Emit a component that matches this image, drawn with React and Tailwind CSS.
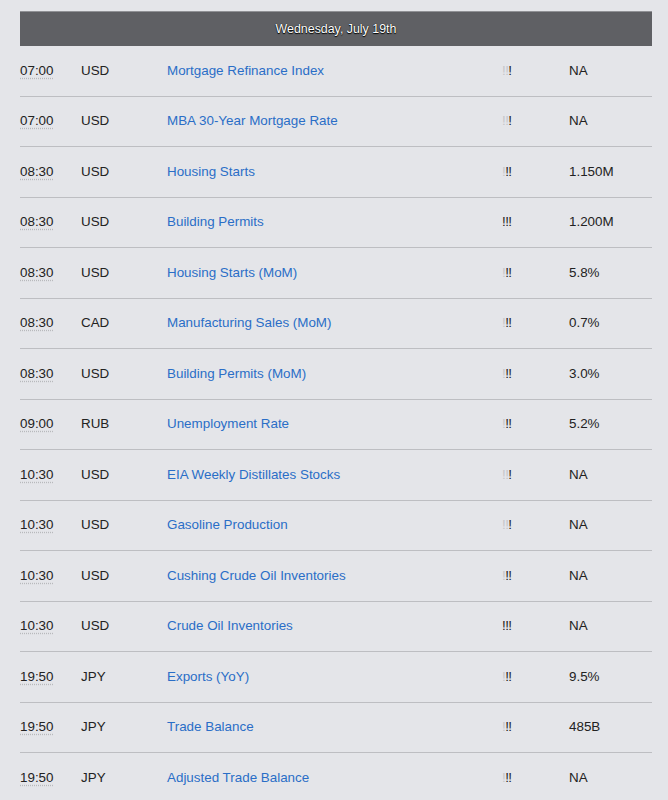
import React from "react";

const rows = [
  ["07:00", "USD", "Mortgage Refinance Index", 1, "NA"],
  ["07:00", "USD", "MBA 30-Year Mortgage Rate", 1, "NA"],
  ["08:30", "USD", "Housing Starts", 2, "1.150M"],
  ["08:30", "USD", "Building Permits", 3, "1.200M"],
  ["08:30", "USD", "Housing Starts (MoM)", 2, "5.8%"],
  ["08:30", "CAD", "Manufacturing Sales (MoM)", 2, "0.7%"],
  ["08:30", "USD", "Building Permits (MoM)", 2, "3.0%"],
  ["09:00", "RUB", "Unemployment Rate", 2, "5.2%"],
  ["10:30", "USD", "EIA Weekly Distillates Stocks", 1, "NA"],
  ["10:30", "USD", "Gasoline Production", 1, "NA"],
  ["10:30", "USD", "Cushing Crude Oil Inventories", 2, "NA"],
  ["10:30", "USD", "Crude Oil Inventories", 3, "NA"],
  ["19:50", "JPY", "Exports (YoY)", 2, "9.5%"],
  ["19:50", "JPY", "Trade Balance", 2, "485B"],
  ["19:50", "JPY", "Adjusted Trade Balance", 2, "NA"],
];

function Importance({ level }) {
  return (
    <span className="tracking-[-0.6px]">
      {[0, 1, 2].map((i) => (
        <span
          key={i}
          className={i < 3 - level ? "text-[#c4c5c9]" : "text-[#1f1f1f]"}
        >
          !
        </span>
      ))}
    </span>
  );
}

export default function App() {
  return (
    <div className="h-[800px] overflow-hidden bg-[#e4e5e9] pt-[11px] pl-[20px] pr-[16px] font-['Liberation_Sans',Arial,sans-serif]">
      <div className="h-[35px] bg-[#5f6064] border-t border-[#909195] flex items-center justify-center text-white text-[12.4px] [text-shadow:0_0_1px_#000,0_1px_1px_#000]">
        Wednesday, July 19th
      </div>
      <div>
        {rows.map(([time, cur, ev, imp, val], idx) => (
          <div
            key={idx}
            className="h-[50.5px] flex items-center border-b border-[#bdbec2] text-[13.4px] text-[#222]"
          >
            <div className="w-[61px] shrink-0">
              <span className="underline decoration-dotted decoration-[#b8b9bc] underline-offset-[3px]">
                {time}
              </span>
            </div>
            <div className="w-[86px] shrink-0">{cur}</div>
            <div className="w-[335px] shrink-0 text-[#2a6ec7]">{ev}</div>
            <div className="w-[67px] shrink-0">
              <Importance level={imp} />
            </div>
            <div className="flex-1">{val}</div>
          </div>
        ))}
      </div>
    </div>
  );
}
